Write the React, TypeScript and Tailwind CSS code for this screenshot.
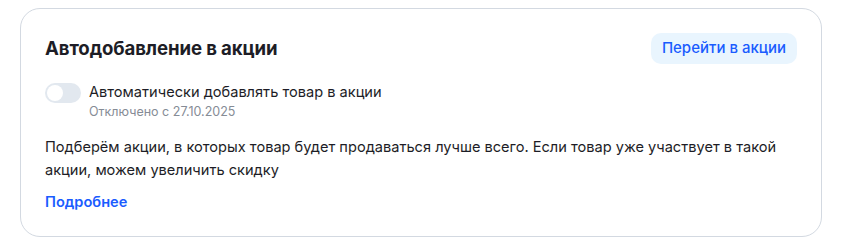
const App = () => {
  return (
    <div className="min-h-[248px] w-full bg-white pt-2 pl-5 pr-[19px] font-['Inter',sans-serif] text-[#1d1d26]">
      <section className="w-[802px] h-[229px] rounded-[20px] border border-[#d3d9e1] px-6 pt-6">
        <div className="flex items-center justify-between">
          <h2 className="text-[18.6px] font-bold leading-[31px] tracking-[-0.1px]">
            Автодобавление в акции
          </h2>
          <button className="h-[31px] w-[146px] rounded-[10px] bg-[#e9f5fe] text-[15px] font-medium text-[#1a5cff]">
            Перейти в акции
          </button>
        </div>

        <div className="mt-[19px] flex items-start gap-2">
          <div className="flex h-5 w-9 shrink-0 items-center rounded-full bg-[#e2e8ef] px-0.5">
            <span className="h-4 w-4 rounded-full bg-white" />
          </div>
          <div className="-mt-px">
            <p className="text-[14.6px] leading-5">Автоматически добавлять товар в акции</p>
            <p className="mt-[2px] text-[12.5px] leading-4 text-[#868c96]">Отключено с 27.10.2025</p>
          </div>
        </div>

        <p className="mt-4 text-[14.6px] leading-[23px]">
          Подберём акции, в которых товар будет продаваться лучше всего. Если товар уже участвует в такой
          акции, можем увеличить скидку
        </p>

        <a href="#" className="mt-[10px] block text-[14.6px] font-semibold leading-5 text-[#1a5cff]">
          Подробнее
        </a>
      </section>
    </div>
  );
};

export default App;
